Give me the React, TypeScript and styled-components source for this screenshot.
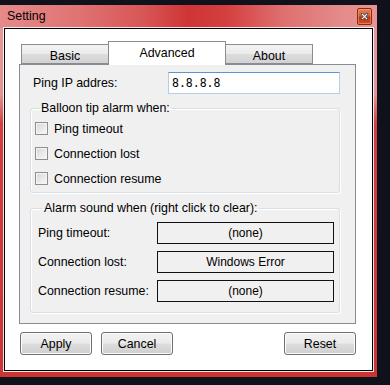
import React from "react";
import styled, { createGlobalStyle } from "styled-components";

const GlobalStyle = createGlobalStyle`
  html, body {
    margin: 0;
    padding: 0;
    background: #0f121b;
    height: 385px;
    overflow: hidden;
  }
  body {
    font-family: "Liberation Sans", Arial, sans-serif;
    font-size: 12.4px;
    color: #000;
  }
`;

const Screen = styled.div`
  padding-top: 5px;
`;

const Window = styled.div`
  width: 377px;
  height: 372px;
  box-sizing: border-box;
  padding: 0 4px 6px 4px;
  display: flex;
  flex-direction: column;
  background: linear-gradient(
    180deg,
    #e59a9a 0%,
    #e49494 24%,
    #d04040 32%,
    #cc3434 100%
  );
`;

const TitleBar = styled.div`
  height: 23px;
  margin: 0 -4px;
  padding: 0 5px 0 7px;
  display: flex;
  align-items: center;
  justify-content: space-between;
  background: linear-gradient(
    90deg,
    #e68a8a 0%,
    #e07474 20%,
    #d85656 38%,
    #cf3535 50%,
    #d43f3f 60%,
    #df6f6f 75%,
    #e48a8a 90%,
    #e79494 100%
  );
`;

const Title = styled.span`
  font-size: 12.4px;
  line-height: 14px;
  margin-top: -1px;
`;

const CloseButton = styled.div`
  width: 15px;
  height: 17px;
  box-sizing: border-box;
  border: 1px solid #8a2a12;
  border-radius: 2px;
  box-shadow: inset 0 0 0 1px rgba(255, 170, 130, 0.5);
  background: linear-gradient(180deg, #e5825a 0%, #d35a2c 45%, #b8360c 55%, #cc5222 100%);
  display: flex;
  align-items: center;
  justify-content: center;
`;

const Client = styled.div`
  flex: 1;
  background: #fff;
  border: 1px solid #000;
  box-shadow: 0 0 0 1px rgba(255, 255, 255, 0.85);
  padding: 12px 0 0 14px;
  display: flex;
  flex-direction: column;
`;

const TabStrip = styled.div`
  display: flex;
  align-items: flex-end;
  height: 23px;
  padding-left: 2px;
  position: relative;
  z-index: 1;
`;

const Tab = styled.div<{ $active?: boolean; $w: number }>`
  width: ${(p) => p.$w}px;
  height: ${(p) => (p.$active ? 24 : 20)}px;
  margin-left: ${(p) => (p.$active ? -1 : 0)}px;
  margin-right: ${(p) => (p.$active ? -1 : 0)}px;
  margin-bottom: ${(p) => (p.$active ? -1 : 0)}px;
  box-sizing: border-box;
  border: 1px solid #898c95;
  border-bottom: ${(p) => (p.$active ? "none" : "1px solid #898c95")};
  background: ${(p) =>
    p.$active
      ? "#ffffff"
      : "linear-gradient(180deg, #f3f3f3 0%, #ebebeb 50%, #dddddd 52%, #d2d2d2 100%)"};
  position: relative;
  z-index: ${(p) => (p.$active ? 2 : 0)};
  display: flex;
  justify-content: center;
  padding-top: 4px;
  line-height: 14px;
`;

const Panel = styled.div`
  width: 337px;
  height: 260px;
  box-sizing: border-box;
  border: 1px solid #898c95;
  background: #f0f0f0;
  padding: 7px 0 0 10px;
  display: flex;
  flex-direction: column;
`;

const PingRow = styled.div`
  display: flex;
  align-items: center;
  padding-left: 3px;
`;

const PingLabel = styled.span`
  width: 135px;
  line-height: 14px;
`;

const TextBox = styled.div`
  width: 172px;
  height: 22px;
  box-sizing: border-box;
  background: #fff;
  border: 1px solid #b5cfe7;
  border-top-color: #5f95cb;
  padding-left: 3px;
  display: flex;
  align-items: center;
  font-family: "DejaVu Sans Mono", "Liberation Mono", monospace;
  font-size: 11.5px;
`;

const Group = styled.fieldset<{ $mt: number }>`
  width: 310px;
  box-sizing: border-box;
  margin: ${(p) => p.$mt}px 0 0 0;
  border: 1px solid #d5dfe5;
  border-radius: 3px;
  box-shadow: inset 1px 1px 0 #fff, 1px 1px 0 #fff;
  min-width: 0;
`;

const CheckGroup = styled(Group)`
  padding: 1px 0 1px 4px;
`;

const SoundGroup = styled(Group)`
  padding: 7px 0 10px 7px;
  display: flex;
  flex-direction: column;
  gap: 7px;
`;

const Legend = styled.legend`
  line-height: 14px;
  padding: 0 2px 0 1px;
  margin-left: 5px;
`;

const CheckRow = styled.label`
  display: flex;
  align-items: center;
  height: 25px;
  gap: 6px;
`;

const CheckBox = styled.span`
  width: 13px;
  height: 13px;
  box-sizing: border-box;
  border: 1px solid #8f8f8f;
  box-shadow: inset 0 0 0 1px #f4f4f4;
  background: linear-gradient(135deg, #d6d6d6 0%, #e8e8e8 50%, #fafafa 100%);
`;

const SoundRow = styled.div`
  display: flex;
  align-items: center;
  height: 22px;
`;

const SoundLabel = styled.span`
  width: 119px;
  line-height: 14px;
`;

const SoundBox = styled.div`
  width: 177px;
  height: 22px;
  box-sizing: border-box;
  border: 1px solid #111;
  background: #f0f0f0;
  display: flex;
  align-items: center;
  justify-content: center;
  line-height: 14px;
  font-size: 12px;
`;

const ButtonRow = styled.div`
  width: 337px;
  margin-top: 8px;
  padding-left: 1px;
  box-sizing: border-box;
  display: flex;
  justify-content: space-between;
`;

const ButtonGroup = styled.div`
  display: flex;
  gap: 9px;
`;

const Button = styled.button`
  width: 72px;
  height: 23px;
  box-sizing: border-box;
  border: 1px solid #707070;
  border-radius: 3px;
  box-shadow: inset 0 0 0 1px #fbfbfb;
  background: linear-gradient(180deg, #f2f2f2 0%, #ebebeb 48%, #dddddd 52%, #cfcfcf 100%);
  font-family: "Liberation Sans", Arial, sans-serif;
  font-size: 12.4px;
  color: #000;
  padding: 0;
  line-height: 14px;
`;

const checks = ["Ping timeout", "Connection lost", "Connection resume"];

const sounds = [
  { label: "Ping timeout:", value: "(none)" },
  { label: "Connection lost:", value: "Windows Error" },
  { label: "Connection resume:", value: "(none)" },
];

export default function App() {
  return (
    <Screen>
      <GlobalStyle />
      <Window>
        <TitleBar>
          <Title>Setting</Title>
          <CloseButton>
            <svg width="7" height="7" viewBox="0 0 7 7">
              <path d="M1 1 L6 6 M6 1 L1 6" stroke="#3b3f57" strokeWidth="2.4" strokeLinecap="square" />
              <path d="M1.2 1.2 L5.8 5.8 M5.8 1.2 L1.2 5.8" stroke="#ffffff" strokeWidth="1.1" strokeLinecap="square" />
            </svg>
          </CloseButton>
        </TitleBar>
        <Client>
          <TabStrip>
            <Tab $w={88}>Basic</Tab>
            <Tab $w={118} $active>
              Advanced
            </Tab>
            <Tab $w={88}>About</Tab>
          </TabStrip>
          <Panel>
            <PingRow>
              <PingLabel>Ping IP addres:</PingLabel>
              <TextBox>8.8.8.8</TextBox>
            </PingRow>
            <CheckGroup $mt={7}>
              <Legend>Balloon tip alarm when:</Legend>
              {checks.map((c) => (
                <CheckRow key={c}>
                  <CheckBox />
                  {c}
                </CheckRow>
              ))}
            </CheckGroup>
            <SoundGroup $mt={8}>
              <Legend>Alarm sound when (right click to clear):</Legend>
              {sounds.map((s) => (
                <SoundRow key={s.label}>
                  <SoundLabel>{s.label}</SoundLabel>
                  <SoundBox>{s.value}</SoundBox>
                </SoundRow>
              ))}
            </SoundGroup>
          </Panel>
          <ButtonRow>
            <ButtonGroup>
              <Button>Apply</Button>
              <Button>Cancel</Button>
            </ButtonGroup>
            <Button>Reset</Button>
          </ButtonRow>
        </Client>
      </Window>
    </Screen>
  );
}
